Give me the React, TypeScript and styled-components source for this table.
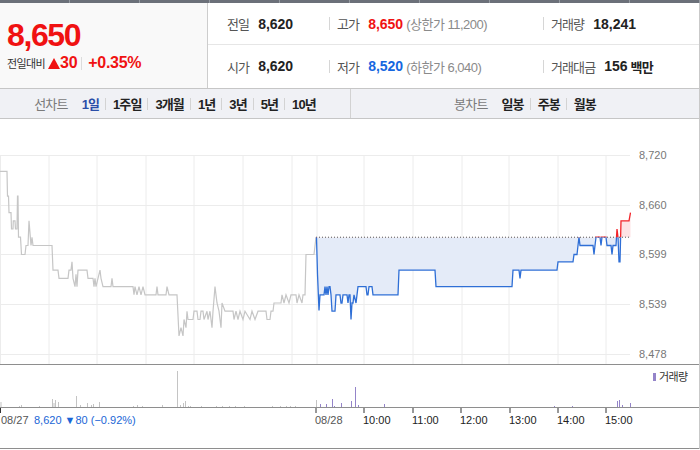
import { Fragment } from 'react';
import styled, { createGlobalStyle } from 'styled-components';

const GlobalStyle = createGlobalStyle`
  html, body {
    margin: 0;
    padding: 0;
    background: #fff;
  }
  body {
    font-family: 'Liberation Sans', 'Noto Sans CJK KR', sans-serif;
    color: #222;
  }
`;

const Page = styled.div`
  width: 700px;
  height: 450px;
  overflow: hidden;
`;

const TopStrip = styled.div`
  display: flex;
  height: 3px;
  background: #6b7079;
`;

const TopTab = styled.div`
  flex: 0 0 69px;
  border-right: 1px solid #959aa2;
`;

const Body = styled.div`
  width: 700px;
  box-sizing: border-box;
  border-right: 1px solid #c9c9c9;
`;

const Summary = styled.div`
  display: flex;
  height: 85px;
`;

const PricePanel = styled.div`
  width: 208px;
  flex-shrink: 0;
  background: #f9f9f9;
  border-right: 1px solid #cdcdcd;
  padding: 16px 0 0 7px;
  box-sizing: border-box;
`;

const BigPrice = styled.div`
  font-size: 32px;
  line-height: 32px;
  font-weight: 700;
  letter-spacing: -1.4px;
  color: #f01212;
`;

const ChangeRow = styled.div`
  display: flex;
  align-items: center;
  margin-top: 2px;
  height: 20px;
`;

const ChangeLabel = styled.span`
  font-size: 11px;
  color: #333;
  letter-spacing: -0.6px;
  margin-right: 3px;
`;

const ChangeAmount = styled.span`
  font-size: 16px;
  font-weight: 700;
  color: #f01212;
  letter-spacing: -0.3px;
`;

const UpMark = styled.span`
  display: inline-block;
  width: 0;
  height: 0;
  border-left: 6px solid transparent;
  border-right: 6px solid transparent;
  border-bottom: 11px solid #f01212;
`;

const ThinDivider = styled.span`
  display: inline-block;
  width: 1px;
  height: 13px;
  background: #dcdcdc;
  margin: 0 6px 0 4px;
`;

const InfoGrid = styled.div`
  flex: 1;
  display: flex;
  flex-direction: column;
`;

const InfoRow = styled.div<{ $last?: boolean }>`
  display: grid;
  grid-template-columns: 121px 214px 1fr;
  height: ${({ $last }) => ($last ? '42px' : '41px')};
  border-bottom: ${({ $last }) => ($last ? 'none' : '1px solid #e6e6e6')};
`;

const InfoCell = styled.div<{ $sep?: boolean }>`
  display: flex;
  align-items: center;
  padding-left: ${({ $sep }) => ($sep ? '0' : '19px')};

  &::before {
    content: '';
    display: ${({ $sep }) => ($sep ? 'inline-block' : 'none')};
    width: 1px;
    height: 13px;
    background: #d6d6d6;
    margin-right: 7px;
  }
`;

const Label = styled.span`
  font-size: 13px;
  color: #555;
  letter-spacing: -0.9px;
  margin-right: 9px;
`;

const Value = styled.span<{ $tone?: 'up' | 'down' }>`
  font-size: 14px;
  font-weight: 700;
  color: ${({ $tone }) => ($tone === 'up' ? '#f01212' : $tone === 'down' ? '#1667e0' : '#222')};
`;

const Unit = styled.span`
  font-size: 13px;
  font-weight: 700;
  letter-spacing: -0.8px;
  margin-left: 3px;
`;

const Note = styled.span`
  font-size: 13px;
  color: #8a8a8a;
  margin-left: 3px;
  letter-spacing: -0.5px;
`;

const Toolbar = styled.div`
  display: flex;
  height: 29px;
  background: #f0f1f5;
  border-top: 1px solid #c6c6c6;
  border-bottom: 1px solid #c6c6c6;
`;

const ToolGroup = styled.div<{ $divider?: boolean }>`
  display: flex;
  align-items: center;
  justify-content: center;
  flex: ${({ $divider }) => ($divider ? '1' : '0 0 350px')};
  border-left: ${({ $divider }) => ($divider ? '1px solid #d2d2d2' : 'none')};
`;

const ToolTitle = styled.span`
  font-size: 13px;
  color: #7a7a7a;
  letter-spacing: -0.8px;
  margin-right: 14px;
`;

const ToolItem = styled.span<{ $active?: boolean }>`
  font-size: 13px;
  font-weight: 700;
  letter-spacing: -0.9px;
  color: ${({ $active }) => ($active ? '#2b4ea8' : '#222')};
`;

const ToolSep = styled.span`
  display: inline-block;
  width: 1px;
  height: 12px;
  background: #d3d3d3;
  margin: 0 7px 0 6px;
`;

const ChartBox = styled.div`
  height: 330px;

  svg {
    display: block;
  }
`;

const toY = (p: number) => 156 + ((8720 - p) * 199) / 242;
const BASE = toY(8620);

type Pt = [number, number];

// 전일 (08/27) 분봉 종가
const prevDay: Pt[] = [
  [0, 8700], [7, 8700], [7.5, 8670], [8.5, 8670], [9, 8650], [11, 8650], [11.5, 8630], [13, 8630],
  [13.3, 8640], [15, 8640], [15.5, 8630], [17, 8630], [17.5, 8670], [18, 8670], [18.5, 8620],
  [20.5, 8620], [21.5, 8599], [25, 8599], [26, 8610], [28, 8610], [29, 8640], [30, 8625], [31, 8610],
  [32, 8620], [33, 8610], [52, 8610], [53, 8580], [58, 8580], [59, 8570], [68, 8570], [69, 8580],
  [71, 8580], [72, 8590], [73, 8570], [75, 8560], [76, 8575], [77, 8560], [78, 8580], [87, 8580],
  [88, 8570], [93, 8570], [94, 8560], [95, 8570], [96, 8560], [98, 8570], [100, 8580], [101, 8570],
  [103, 8560], [111, 8560], [112, 8570], [113, 8560], [133, 8560], [134, 8550], [135, 8560],
  [137, 8550], [139, 8560], [141, 8550], [143, 8560], [145, 8550], [156, 8550], [157, 8560],
  [158, 8550], [166, 8550], [167, 8560], [169, 8550], [177, 8550], [179, 8500], [181, 8510],
  [183, 8500], [184, 8520], [186, 8510], [187, 8530], [188, 8520], [193, 8520], [194, 8530],
  [197, 8530], [198, 8520], [200, 8520], [201, 8530], [203, 8530], [204, 8520], [207, 8530],
  [208, 8520], [210, 8530], [212, 8510], [213, 8530], [215, 8560], [217, 8540], [219, 8530],
  [221, 8510], [222, 8540], [225, 8530], [233, 8530], [234, 8520], [236, 8530], [238, 8520],
  [240, 8530], [243, 8520], [245, 8530], [250, 8520], [252, 8530], [255, 8520], [258, 8530],
  [266, 8530], [267, 8520], [270, 8520], [271, 8530], [273, 8530], [274, 8540], [281, 8540],
  [282, 8550], [284, 8540], [286, 8550], [289, 8540], [291, 8550], [296, 8550], [297, 8540],
  [299, 8550], [302, 8540], [303, 8550], [305, 8550], [306, 8599], [314, 8599], [316, 8620],
];

// 당일 (08/28)
const today: Pt[] = [
  [316.5, 8620], [317.5, 8575], [319, 8531], [320, 8550], [324, 8550], [325, 8560], [326, 8550],
  [327, 8560], [328, 8550], [329, 8560], [330, 8560], [331, 8550], [332, 8530], [335, 8530],
  [336, 8550], [340, 8550], [341, 8540], [342, 8540], [343, 8550], [347, 8550], [348, 8540],
  [349, 8550], [350, 8550], [351, 8520], [352, 8540], [353, 8540], [354, 8550], [356, 8540],
  [357, 8550], [358, 8560], [366, 8560], [367, 8550], [368, 8550], [369, 8560], [372, 8560],
  [373, 8550], [398, 8550], [399, 8580], [435, 8580], [436, 8560], [512, 8560], [513, 8580],
  [519, 8580], [520, 8570], [521, 8580], [557, 8580], [558, 8590], [573, 8590], [574, 8599],
  [577, 8599], [578, 8610], [579, 8620], [580, 8610], [593, 8610], [594, 8599], [595, 8610],
  [596, 8620], [600, 8620], [601, 8610], [602, 8620], [606, 8620], [607, 8610], [611, 8610],
  [612, 8599], [613, 8610], [616, 8610], [617, 8630], [618, 8620], [619, 8590], [620, 8590],
  [621, 8640], [629, 8640], [630.5, 8650],
];

const linePath = (pts: Pt[]) =>
  pts.map(([x, p], i) => `${i ? 'L' : 'M'}${x} ${toY(p).toFixed(1)}`).join(' ');

const areaPath = (pts: Pt[]) =>
  `${linePath(pts)} L${pts[pts.length - 1][0]} ${BASE} L${pts[0][0]} ${BASE} Z`;

const H_GRID = [
  { y: 156, label: '8,720' },
  { y: 206, label: '8,660' },
  { y: 255, label: '8,599' },
  { y: 305, label: '8,539' },
  { y: 355, label: '8,478' },
];

const V_GRID = [0.5, 49, 97, 146, 194, 243, 292, 317, 364, 413, 462, 509, 558, 606];

const TICKS = [
  { x: 0.5, label: '08/27', color: '#555' },
  { x: 316, label: '08/28', color: '#555' },
  { x: 364, label: '10:00', color: '#222' },
  { x: 413, label: '11:00', color: '#222' },
  { x: 461, label: '12:00', color: '#222' },
  { x: 510, label: '13:00', color: '#222' },
  { x: 558, label: '14:00', color: '#222' },
  { x: 606, label: '15:00', color: '#222' },
];

const VOLUMES: Pt[] = [
  [0.5, 5], [19, 1], [21, 2], [39, 1], [52, 8], [53.5, 4], [55, 7], [58, 5], [76, 11], [80, 2],
  [87, 4], [91, 2], [93, 3], [99, 5], [133, 1], [137, 2], [142, 1], [162, 2], [177, 36], [180, 2],
  [183, 4], [185, 6], [188, 1], [190, 1], [201, 1], [216, 1], [222, 1], [229, 1], [235, 1],
  [244, 1], [272, 1], [280, 1], [286, 1], [290, 1], [295, 1], [316, 7], [320, 3], [326, 3],
  [332, 8], [334, 1], [341, 4], [351, 6], [355, 20], [358, 2], [384, 3], [554, 1], [572, 1],
  [617, 6], [619, 7], [622, 2], [630, 4],
];

const AXIS_FONT = "'Liberation Sans', Arial, sans-serif";
const KR_FONT = "'Noto Sans CJK KR', sans-serif";

function PriceChart() {
  return (
    <svg width={699} height={330} viewBox="0 120 699 330">
      <defs>
        <clipPath id="above">
          <rect x={0} y={120} width={699} height={BASE - 120} />
        </clipPath>
        <clipPath id="below">
          <rect x={0} y={BASE} width={699} height={365 - BASE} />
        </clipPath>
      </defs>

      {H_GRID.map((g) => (
        <line key={g.y} x1={0} x2={630} y1={g.y + 0.5} y2={g.y + 0.5} stroke="#ececec" />
      ))}
      {V_GRID.map((x) => (
        <line key={x} x1={x} x2={x} y1={156} y2={365} stroke="#ececec" />
      ))}
      {H_GRID.map((g) => (
        <text key={g.label} x={639} y={g.y + 4} fontSize={11} fill="#777" fontFamily={AXIS_FONT}>
          {g.label}
        </text>
      ))}

      <path d={linePath(prevDay)} fill="none" stroke="#c6c6c6" strokeWidth={1.2} />

      <path d={areaPath(today)} fill="#e4ebf8" clipPath="url(#below)" />
      <path d={areaPath(today)} fill="#fde2e4" clipPath="url(#above)" />
      <line x1={316} x2={630} y1={BASE} y2={BASE} stroke="#555" strokeDasharray="1 2" />
      <path d={linePath(today)} fill="none" stroke="#2f6fd6" strokeWidth={1.3} clipPath="url(#below)" />
      <path d={linePath(today)} fill="none" stroke="#f2242a" strokeWidth={1.3} clipPath="url(#above)" />

      <line x1={0} x2={699} y1={365.5} y2={365.5} stroke="#8e8e8e" />
      <line x1={0} x2={699} y1={408.5} y2={408.5} stroke="#8e8e8e" />
      <line x1={0} x2={699} y1={449.5} y2={449.5} stroke="#8e8e8e" />

      {VOLUMES.map(([x, h]) => (
        <rect key={x} x={x} y={408 - h} width={1} height={h} fill={x >= 318 ? '#9484c9' : '#c4c4c4'} />
      ))}

      <rect x={653} y={374} width={3} height={8} fill="#9484c9" />
      <text x={659} y={382} fontSize={11} fill="#333" fontFamily={KR_FONT} letterSpacing={-0.6}>
        거래량
      </text>

      {TICKS.map((t) => (
        <g key={t.label}>
          <line x1={t.x} x2={t.x} y1={409} y2={414} stroke="#333" />
          <text x={t.x === 0.5 ? 1 : t.x - 1} y={425} fontSize={11} fill={t.color} fontFamily={AXIS_FONT}>
            {t.label}
          </text>
        </g>
      ))}
      <text x={34} y={425} fontSize={11} fill="#1a66d6" fontFamily={AXIS_FONT}>
        8,620 ▼80 (−0.92%)
      </text>
    </svg>
  );
}

const LINE_RANGES = ['1일', '1주일', '3개월', '1년', '3년', '5년', '10년'];
const CANDLES = ['일봉', '주봉', '월봉'];

function ToolList({ items, active }: { items: string[]; active?: string }) {
  return (
    <>
      {items.map((item, i) => (
        <Fragment key={item}>
          {i > 0 && <ToolSep />}
          <ToolItem $active={item === active}>{item}</ToolItem>
        </Fragment>
      ))}
    </>
  );
}

export default function App() {
  return (
    <>
      <GlobalStyle />
      <Page>
        <TopStrip>
          {Array.from({ length: 10 }).map((_, i) => (
            <TopTab key={i} />
          ))}
        </TopStrip>
        <Body>
          <Summary>
            <PricePanel>
              <BigPrice>8,650</BigPrice>
              <ChangeRow>
                <ChangeLabel>전일대비</ChangeLabel>
                <UpMark />
                <ChangeAmount>30</ChangeAmount>
                <ThinDivider />
                <ChangeAmount>+0.35%</ChangeAmount>
              </ChangeRow>
            </PricePanel>
            <InfoGrid>
              <InfoRow>
                <InfoCell>
                  <Label>전일</Label>
                  <Value>8,620</Value>
                </InfoCell>
                <InfoCell $sep>
                  <Label>고가</Label>
                  <Value $tone="up">8,650</Value>
                  <Note>(상한가 11,200)</Note>
                </InfoCell>
                <InfoCell $sep>
                  <Label>거래량</Label>
                  <Value>18,241</Value>
                </InfoCell>
              </InfoRow>
              <InfoRow $last>
                <InfoCell>
                  <Label>시가</Label>
                  <Value>8,620</Value>
                </InfoCell>
                <InfoCell $sep>
                  <Label>저가</Label>
                  <Value $tone="down">8,520</Value>
                  <Note>(하한가 6,040)</Note>
                </InfoCell>
                <InfoCell $sep>
                  <Label>거래대금</Label>
                  <Value>156</Value>
                  <Unit>백만</Unit>
                </InfoCell>
              </InfoRow>
            </InfoGrid>
          </Summary>

          <Toolbar>
            <ToolGroup>
              <ToolTitle>선차트</ToolTitle>
              <ToolList items={LINE_RANGES} active="1일" />
            </ToolGroup>
            <ToolGroup $divider>
              <ToolTitle>봉차트</ToolTitle>
              <ToolList items={CANDLES} />
            </ToolGroup>
          </Toolbar>

          <ChartBox>
            <PriceChart />
          </ChartBox>
        </Body>
      </Page>
    </>
  );
}
